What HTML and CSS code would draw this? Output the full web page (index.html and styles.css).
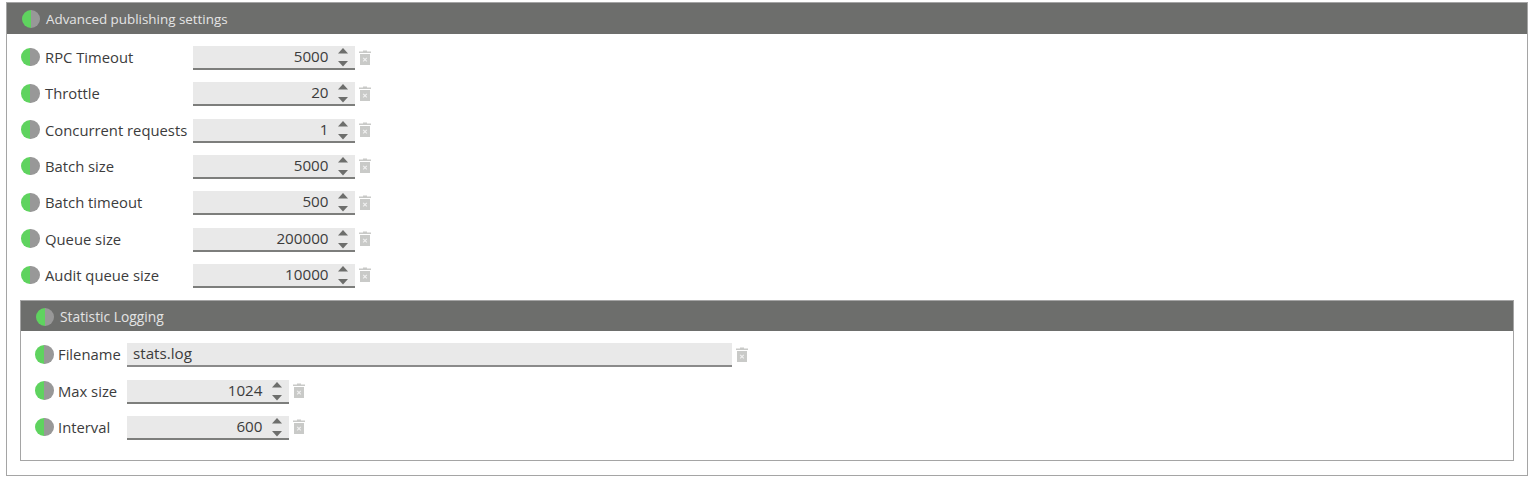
FILE: index.html
```html
<!DOCTYPE html>
<html lang="en">
<head>
    <meta charset="UTF-8">
    <title>Advanced publishing settings</title>
    <link rel="stylesheet" href="styles.css">
</head>
<body>
    <svg class="defs" width="0" height="0">
        <symbol id="trash" viewBox="0 0 12 15">
            <path d="M4 0.500h4v1h4v1.500h-12v-1.500h4z" fill="#c9cac8"/>
            <path d="M1 4h10v11h-10z" fill="#c9cac8"/>
            <path d="M4.200 7.800l3.600 3.600M7.800 7.800l-3.600 3.600" stroke="#f0f0f0" stroke-width="1.200"/>
        </symbol>
        <symbol id="spin" viewBox="0 0 14 22">
            <path d="M7 2l5 5.500h-10z" fill="#6d6e6c"/>
            <path d="M2 15h10l-5 5.500z" fill="#6d6e6c"/>
        </symbol>
    </svg>

    <div class="panel">
        <div class="panel-title"><span class="dot"></span>Advanced publishing settings</div>
        <div class="panel-body">
            <div class="row">
                <span class="dot"></span><label>RPC Timeout</label>
                <div class="field"><span class="value">5000</span><svg class="spin"><use href="#spin"/></svg></div>
                <svg class="trash"><use href="#trash"/></svg>
            </div>
            <div class="row">
                <span class="dot"></span><label>Throttle</label>
                <div class="field"><span class="value">20</span><svg class="spin"><use href="#spin"/></svg></div>
                <svg class="trash"><use href="#trash"/></svg>
            </div>
            <div class="row">
                <span class="dot"></span><label>Concurrent requests</label>
                <div class="field"><span class="value">1</span><svg class="spin"><use href="#spin"/></svg></div>
                <svg class="trash"><use href="#trash"/></svg>
            </div>
            <div class="row">
                <span class="dot"></span><label>Batch size</label>
                <div class="field"><span class="value">5000</span><svg class="spin"><use href="#spin"/></svg></div>
                <svg class="trash"><use href="#trash"/></svg>
            </div>
            <div class="row">
                <span class="dot"></span><label>Batch timeout</label>
                <div class="field"><span class="value">500</span><svg class="spin"><use href="#spin"/></svg></div>
                <svg class="trash"><use href="#trash"/></svg>
            </div>
            <div class="row">
                <span class="dot"></span><label>Queue size</label>
                <div class="field"><span class="value">200000</span><svg class="spin"><use href="#spin"/></svg></div>
                <svg class="trash"><use href="#trash"/></svg>
            </div>
            <div class="row">
                <span class="dot"></span><label>Audit queue size</label>
                <div class="field"><span class="value">10000</span><svg class="spin"><use href="#spin"/></svg></div>
                <svg class="trash"><use href="#trash"/></svg>
            </div>

            <div class="panel inner">
                <div class="panel-title"><span class="dot"></span>Statistic Logging</div>
                <div class="panel-body">
                    <div class="row">
                        <span class="dot"></span><label>Filename</label>
                        <div class="field text"><span class="value">stats.log</span></div>
                        <svg class="trash"><use href="#trash"/></svg>
                    </div>
                    <div class="row">
                        <span class="dot"></span><label>Max size</label>
                        <div class="field"><span class="value">1024</span><svg class="spin"><use href="#spin"/></svg></div>
                        <svg class="trash"><use href="#trash"/></svg>
                    </div>
                    <div class="row">
                        <span class="dot"></span><label>Interval</label>
                        <div class="field"><span class="value">600</span><svg class="spin"><use href="#spin"/></svg></div>
                        <svg class="trash"><use href="#trash"/></svg>
                    </div>
                </div>
            </div>
        </div>
    </div>
</body>
</html>
```

FILE: styles.css
```css
body {
    margin: 0;
    padding: 2px 4px 0 6px;
    background: #fff;
    font-family: "Open Sans", sans-serif;
    font-size: 14.8px;
    color: #3c3c3c;
}
.defs {
    position: absolute;
}
.panel {
    height: 474px;
    box-sizing: border-box;
    border: 1px solid #a5a5a5;
}
.panel-title {
    display: flex;
    align-items: center;
    height: 31px;
    padding: 1px 0 0 15px;
    box-sizing: border-box;
    background: #6d6e6c;
    color: #e4e4e4;
    font-size: 13.4px;
}
.panel-title .dot {
    width: 18px;
    height: 18px;
    margin-right: 6px;
}
.panel-body {
    padding: 11px 13px 0;
}
.row {
    display: flex;
    align-items: center;
    height: 24px;
    margin-bottom: 12.33px;
}
.dot {
    flex: none;
    width: 18.5px;
    height: 18.5px;
    border-radius: 50%;
    background: linear-gradient(90deg, #5fd35f 50%, #989898 50%);
}
.row .dot {
    margin-left: 1px;
}
label {
    width: 153.5px;
    padding-left: 5.5px;
    box-sizing: border-box;
    white-space: nowrap;
}
.field {
    display: flex;
    align-items: center;
    justify-content: flex-end;
    box-sizing: border-box;
    width: 161.5px;
    height: 24px;
    margin-top: 2px;
    background: #e9e9e9;
    border-bottom: 2px solid #7d7e7c;
}
.value {
    position: relative;
    top: -1px;
    font-size: 15.2px;
}
.spin {
    width: 14px;
    height: 22px;
    margin: 0 5px 0 7px;
}
.trash {
    width: 12px;
    height: 15px;
    margin-left: 4px;
}
.inner {
    height: 161px;
    margin-top: 13.33px;
}
.inner .panel-title {
    height: 30px;
    font-size: 13.8px;
}
.inner .panel-body {
    padding-top: 11px;
}
.inner label {
    width: 73.5px;
    padding-left: 4.5px;
}
.field.text {
    width: 605px;
    justify-content: flex-start;
    padding-left: 6px;
    border-bottom-color: #8a8a8a;
}
```
